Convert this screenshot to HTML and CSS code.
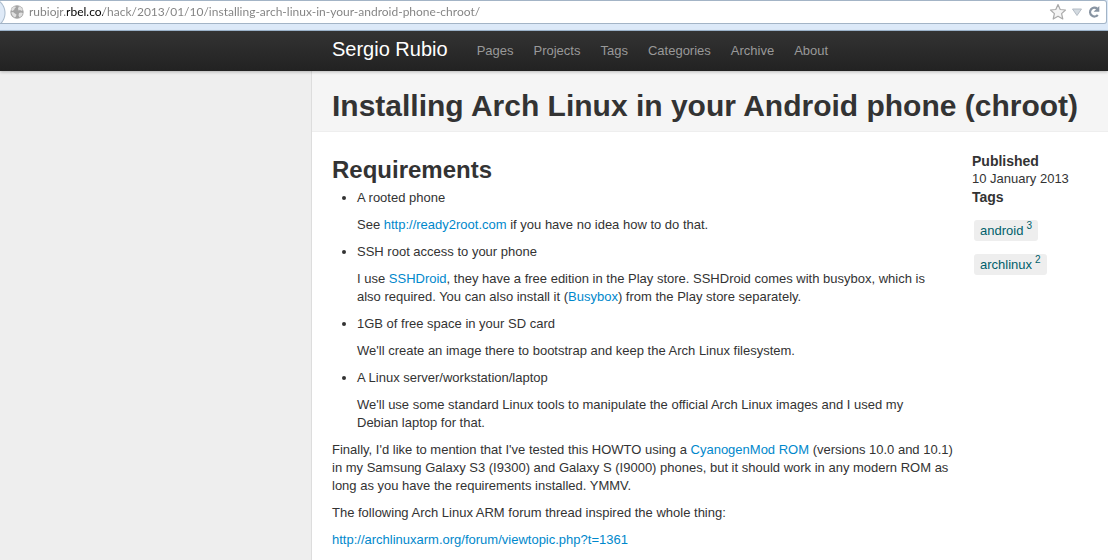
FILE: index.html
```html
<!DOCTYPE html>
<html lang="en">
<head>
<meta charset="utf-8">
<title>Installing Arch Linux in your Android phone (chroot)</title>
<link rel="stylesheet" href="styles.css">
</head>
<body>
<div class="browser">
  <div class="address">
    <svg class="globe" width="14" height="14" viewBox="0 0 14 14" aria-hidden="true">
      <circle cx="7" cy="7" r="6.7" fill="#a3a3a3"/>
      <path d="M1 5 2.5 2.5 5 1.2 6 2.2 4.8 3.2 4.2 4.8 2.5 6ZM9 1.2 11 2.2 12.8 4.5 12 6 10 5 8.5 5.5 8 3.5ZM1.2 7.5 3 7 5 8.5 6.5 9.5 6 11.5 4.5 12.5 2.5 10.5ZM9 8 11 7.5 12.8 8 12 10.5 9.5 12.5 8.5 10.5Z" fill="#e0e0e0"/>
    </svg>
    <input class="url" type="text" aria-label="Address" value="rubiojr.rbel.co/hack/2013/01/10/installing-arch-linux-in-your-android-phone-chroot/">
    <button class="tool" type="button" aria-label="Bookmark">
      <svg width="18" height="18" viewBox="0 0 18 18"><path d="M9 1.5 11.2 6.5 16.5 7 12.6 10.6 13.8 16 9 13.2 4.2 16 5.4 10.6 1.5 7 6.8 6.5Z" fill="#f4f4f4" stroke="#aaa" stroke-width="1.2" stroke-linejoin="round"/></svg>
    </button>
    <button class="tool" type="button" aria-label="History">
      <svg width="12" height="10" viewBox="0 0 12 10"><path d="M1.5 2H10.5L6 8.5Z" fill="#d3dae0" stroke="#b4bcc5"/></svg>
    </button>
    <button class="tool" type="button" aria-label="Reload">
      <svg width="14" height="14" viewBox="0 0 14 14"><path d="M10.2 3.6A4.4 4.4 0 1 0 10.8 10" fill="none" stroke="#8894a2" stroke-width="2.3"/><path d="M12.3 1V6.8H6.6Z" fill="#8894a2"/></svg>
    </button>
  </div>
</div>
<header class="navbar">
  <a class="brand" href="#">Sergio Rubio</a>
  <nav class="nav">
    <a href="#">Pages</a>
    <a href="#">Projects</a>
    <a href="#">Tags</a>
    <a href="#">Categories</a>
    <a href="#">Archive</a>
    <a href="#">About</a>
  </nav>
</header>
<main class="page">
  <div class="page-header"><h1>Installing Arch Linux in your Android phone (chroot)</h1></div>
  <div class="columns">
    <article class="post">
      <h2>Requirements</h2>
      <ul class="steps">
        <li><p>A rooted phone</p><p>See <a href="#">http://ready2root.com</a> if you have no idea how to do that.</p></li>
        <li><p>SSH root access to your phone</p><p>I use <a href="#">SSHDroid</a>, they have a free edition in the Play store. SSHDroid comes with busybox, which is also required. You can also install it (<a href="#">Busybox</a>) from the Play store separately.</p></li>
        <li><p>1GB of free space in your SD card</p><p>We'll create an image there to bootstrap and keep the Arch Linux filesystem.</p></li>
        <li><p>A Linux server/workstation/laptop</p><p>We'll use some standard Linux tools to manipulate the official Arch Linux images and I used my Debian laptop for that.</p></li>
      </ul>
      <p>Finally, I'd like to mention that I've tested this HOWTO using a <a href="#">CyanogenMod ROM</a> (versions 10.0 and 10.1) in my Samsung Galaxy S3 (I9300) and Galaxy S (I9000) phones, but it should work in any modern ROM as long as you have the requirements installed. YMMV.</p>
      <p>The following Arch Linux ARM forum thread inspired the whole thing:</p>
      <p><a href="#">http://archlinuxarm.org/forum/viewtopic.php?t=1361</a></p>
    </article>
    <aside class="meta">
      <h4>Published</h4>
      <div>10 January 2013</div>
      <h4>Tags</h4>
      <ul class="tags">
        <li><a href="#">android <span>3</span></a></li>
        <li><a href="#">archlinux <span>2</span></a></li>
      </ul>
    </aside>
  </div>
</main>
</body>
</html>
```
FILE: styles.css
```css
* { box-sizing: border-box; }

body {
  margin: 0;
  min-height: 100vh;
  display: flex;
  flex-direction: column;
  background: #eee;
  color: #333;
  font: 13px/18px "Liberation Sans", Arial, sans-serif;
}

h1, h2, h4, p, ul { margin: 0; }
a { color: #08c; text-decoration: none; }

.browser {
  padding-bottom: 6px;
  background: #dce9f8;
  border-bottom: 1px solid #a3bad3;
}

.address {
  display: flex;
  align-items: center;
  height: 24px;
  margin-right: 1px;
  padding: 0 5px 0 10px;
  background: radial-gradient(circle at -10px 12px, #dfeaf7 14px, #a9bacb 15px, #fff 16px);
  border: 1px solid #a3b4c6;
  border-left: 0;
  border-radius: 0 3px 3px 0;
}

.url {
  flex: 1;
  min-width: 0;
  height: 20px;
  margin-left: 5px;
  padding: 0;
  border: 0;
  outline: 0;
  font: 12px/20px Lato, "Open Sans", sans-serif;
  color: transparent;
  background: linear-gradient(to right, #808080 38px, #000 38px, #000 74px, #808080 74px);
  -webkit-background-clip: text;
  background-clip: text;
}

.tool {
  display: flex;
  margin-left: 4px;
  padding: 0;
  border: 0;
  background: none;
}

.navbar {
  position: relative;
  display: flex;
  align-items: center;
  height: 40px;
  padding-left: 332px;
  background: linear-gradient(#333, #222);
  box-shadow: 0 1px 3px rgba(0, 0, 0, 0.25);
}

.brand {
  margin-right: 19px;
  color: #fff;
  font-size: 20px;
  line-height: 36px;
  padding-bottom: 4px;
}

.nav { display: flex; }
.nav a { padding: 0 10px; color: #999; }

.page {
  flex: 1;
  margin-left: 311px;
  background: #fff;
  border-left: 1px solid #ddd;
}

.page-header {
  padding: 17px 20px 7px;
  background: #f5f5f5;
  border-bottom: 1px solid #eee;
}

h1 { font-size: 30px; line-height: 36px; white-space: nowrap; }

.columns {
  display: flex;
  gap: 20px;
  padding: 20px 20px 0;
}

.post { flex: 0 1 622px; }
.post p { margin-bottom: 9px; }
h2 { margin-bottom: 1px; font-size: 24px; line-height: 36px; }

.steps { padding: 0 20px 0 25px; }

.meta { flex: 1 0 116px; margin-left: -2px; }
h4 { font-size: 14px; line-height: 18px; }

.tags {
  display: flex;
  flex-direction: column;
  align-items: flex-start;
  gap: 13px;
  padding: 14px 2px;
  list-style: none;
}

.tags a {
  display: flex;
  gap: 3px;
  height: 21px;
  padding: 0 6px;
  border-radius: 3px;
  background: #eee;
  color: #005f6b;
  line-height: 21px;
}

.tags span { font-size: 10px; line-height: 12px; }
```
